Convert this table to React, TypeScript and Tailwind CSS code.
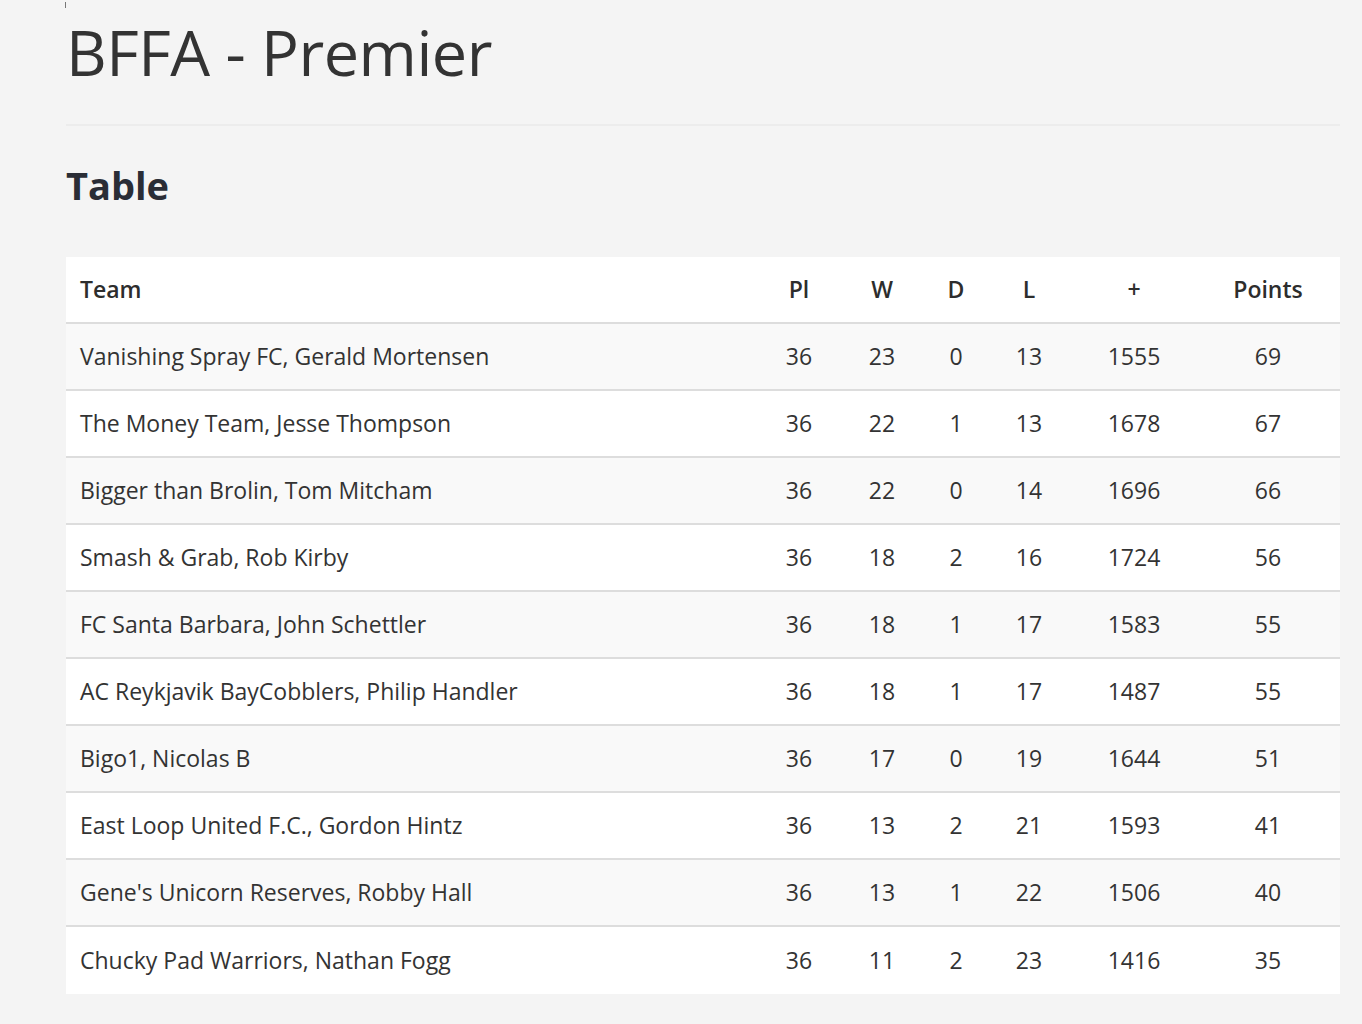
const rows: [string, number, number, number, number, number, number][] = [
  ["Vanishing Spray FC, Gerald Mortensen", 36, 23, 0, 13, 1555, 69],
  ["The Money Team, Jesse Thompson", 36, 22, 1, 13, 1678, 67],
  ["Bigger than Brolin, Tom Mitcham", 36, 22, 0, 14, 1696, 66],
  ["Smash & Grab, Rob Kirby", 36, 18, 2, 16, 1724, 56],
  ["FC Santa Barbara, John Schettler", 36, 18, 1, 17, 1583, 55],
  ["AC Reykjavik BayCobblers, Philip Handler", 36, 18, 1, 17, 1487, 55],
  ["Bigo1, Nicolas B", 36, 17, 0, 19, 1644, 51],
  ["East Loop United F.C., Gordon Hintz", 36, 13, 2, 21, 1593, 41],
  ["Gene's Unicorn Reserves, Robby Hall", 36, 13, 1, 22, 1506, 40],
  ["Chucky Pad Warriors, Nathan Fogg", 36, 11, 2, 23, 1416, 35],
];

export default function App() {
  return (
    <div className="min-h-[1024px] bg-[#f4f4f4] font-['Open_Sans',sans-serif] text-[#333]">
      <div className="pl-[66px] pr-[22px]">
        <div className="h-[6px] w-px bg-[#777] ml-[-1px] translate-y-[2px]" />
        <h1 className="text-[63px] leading-none mt-[14px] tracking-[-0.5px]">BFFA - Premier</h1>
        <hr className="mt-[41px] border-t-2 border-[#ececec]" />
        <h2 className="mt-[40px] text-[38px] leading-none font-bold text-[#2a2d36]">Table</h2>
        <table className="mt-[53px] w-full table-fixed bg-white text-[23px]">
          <colgroup>
            <col className="w-[694px]" />
            <col className="w-[78px]" />
            <col className="w-[88px]" />
            <col className="w-[60px]" />
            <col className="w-[86px]" />
            <col className="w-[124px]" />
            <col className="w-[144px]" />
          </colgroup>
          <thead>
            <tr className="h-[66px] border-b-2 border-[#dddddd] text-[#2d2d2d]">
              <th className="pl-[14px] text-left font-semibold">Team</th>
              <th className="font-semibold">Pl</th>
              <th className="font-semibold">W</th>
              <th className="font-semibold">D</th>
              <th className="font-semibold">L</th>
              <th className="font-semibold">+</th>
              <th className="font-semibold">Points</th>
            </tr>
          </thead>
          <tbody>
            {rows.map((r, i) => (
              <tr
                key={r[0]}
                className={
                  (i % 2 === 0 ? "bg-[#f9f9f9] " : "bg-white ") +
                  (i < rows.length - 1 ? "h-[67px] border-b-2 border-[#dddddd]" : "h-[68px]")
                }
              >
                <td className="pl-[14px] text-left whitespace-nowrap">{r[0]}</td>
                {r.slice(1).map((v, j) => (
                  <td key={j} className="text-center">{v}</td>
                ))}
              </tr>
            ))}
          </tbody>
        </table>
      </div>
    </div>
  );
}
